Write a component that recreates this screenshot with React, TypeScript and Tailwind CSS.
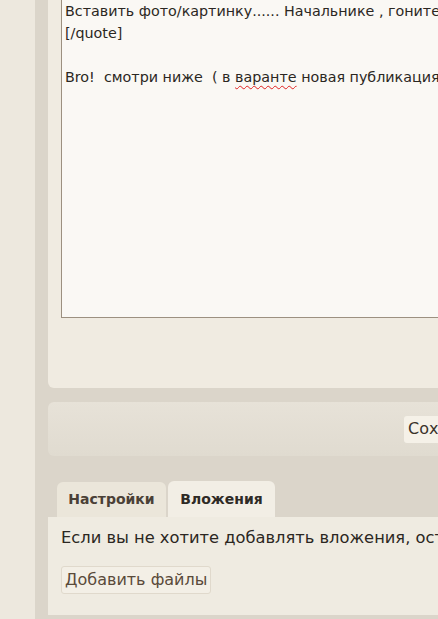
import React from 'react';

const font = { fontFamily: '"DejaVu Sans", Verdana, sans-serif' };

const App: React.FC = () => {
  return (
    <div className="flex h-[619px] w-[438px] overflow-hidden" style={font}>
      {/* Left page margin */}
      <div className="w-[35px] shrink-0 bg-[#ede8de]" />

      {/* Main column */}
      <div className="flex min-w-0 flex-1 flex-col bg-[#dbd5ca] pl-[13px]">
        {/* Editor panel */}
        <div className="shrink-0 rounded-bl-[6px] bg-[#f0ebe1] pb-[70px] pl-[13px]">
          <div className="h-[318px] overflow-hidden whitespace-nowrap border-b border-l border-[#9c9080] bg-[#faf8f4] pl-[3px] text-[14.3px] leading-[22px] text-[#2b2722]">
            <div>Вставить фото/картинку...... Начальнике , гоните лесом</div>
            <div>[/quote]</div>
            <div>&nbsp;</div>
            <div>
              Bro!&nbsp; смотри ниже&nbsp; ( в{' '}
              <span className="underline decoration-wavy decoration-[#e02020] decoration-1 underline-offset-[3px]">варанте</span>{' '}
              новая публикация )
            </div>
          </div>
        </div>

        {/* Submit bar */}
        <div className="mt-[14px] flex h-[54px] shrink-0 items-center overflow-hidden rounded-l-[6px] bg-gradient-to-b from-[#e7e2d8] to-[#e0dbd0] pl-[356px]">
          <button className="h-[27px] shrink-0 whitespace-nowrap rounded-[3px] bg-[#f5f1e8] px-[4px] text-[16px] text-[#3b332a]">
            Сохранить
          </button>
        </div>

        {/* Tabs */}
        <div className="mt-[25px] flex items-end gap-[2px] pl-[9px]">
          <div className="flex h-[35px] w-[109px] items-center justify-center rounded-t-[6px] bg-[#ebe6da] text-[14px] font-bold text-[#4a4036]">
            Настройки
          </div>
          <div className="flex h-[36px] w-[107px] items-center justify-center rounded-t-[6px] bg-[#f2eee5] text-[14px] font-bold text-[#2e2a25]">
            Вложения
          </div>
        </div>

        {/* Tab content */}
        <div className="h-[98px] shrink-0 overflow-hidden whitespace-nowrap bg-[#efebe1] pl-[13px] pt-[10px]">
          <div className="text-[16.3px] leading-[22px] text-[#2b2722]">
            Если вы не хотите добавлять вложения, оставьте это поле пустым.
          </div>
          <button className="mt-[17px] h-[28px] rounded-[3px] border border-[#e0d9cc] bg-[#f3efe6] px-[3px] text-[16px] text-[#5a4a3a]">
            Добавить файлы
          </button>
        </div>
      </div>
    </div>
  );
};

export default App;
